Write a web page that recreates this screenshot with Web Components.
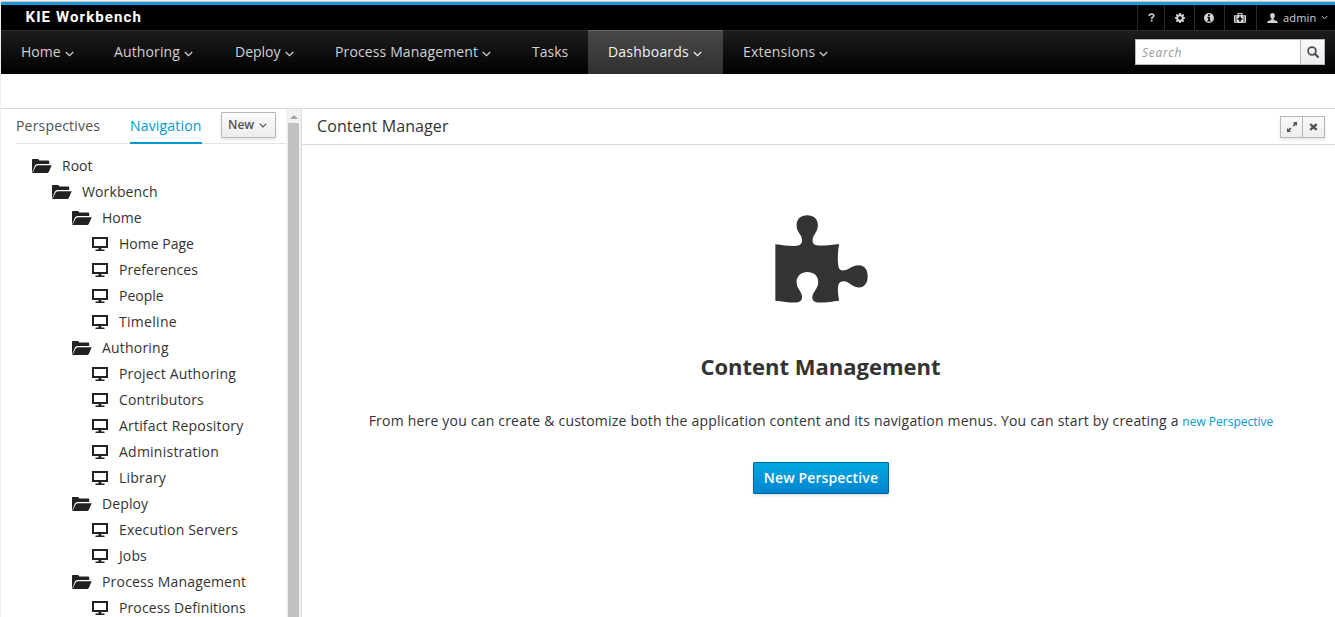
<!DOCTYPE html>
<html lang="en"><head><meta charset="utf-8"><title>KIE Workbench</title>
<style>
html,body{margin:0;height:100%;overflow:hidden;background:#fff}
body{font:14px/20px "Open Sans","Noto Sans",sans-serif;color:#333}
</style></head><body>
<kie-app></kie-app>
<script>
const define=(name,css,html,setup)=>{
  const t=document.createElement('template');
  t.innerHTML=`<style>*{box-sizing:border-box}:host{box-sizing:border-box;display:block}${css}</style>${html}`;
  customElements.define(name,class extends HTMLElement{
    connectedCallback(){
      if(this.shadowRoot)return;
      const r=this.attachShadow({mode:'open'});
      r.append(t.content.cloneNode(true));
      if(setup)setup(this,r);
    }
  });
};
const icons={
  chevron:['0 0 8 5','<path d="M.7.7 4 4 7.3.7" fill="none" stroke="currentColor" stroke-width="1.1"/>'],
  help:['0 0 8 10','<path d="M1.2 3.1Q1.4 1 4 1 6.6 1 6.6 3 6.6 4 5.3 4.8 4.3 5.3 4.2 6.5" fill="none" stroke="currentColor" stroke-width="1.9"/><path d="M3.1 7.5h2.1v2H3.1z" fill="currentColor"/>'],
  gear:['0 0 10 10','<path fill="currentColor" fill-rule="evenodd" d="M4.2 0h1.6l.3 1.4.8.3L8.1.9l1.1 1.1-.8 1.2.3.8 1.3.2v1.6l-1.3.3-.3.8.8 1.2L8 9.2l-1.2-.8-.7.3L5.8 10H4.2l-.3-1.3-.8-.3-1.2.8L.8 8.1l.8-1.2-.3-.8L0 5.8V4.2L1.3 4l.3-.8L.8 2 1.9.9l1.2.8.8-.3zM5 3.2A1.8 1.8 0 1 0 5 6.8 1.8 1.8 0 1 0 5 3.2z"/>'],
  info:['0 0 10 10','<path fill="currentColor" fill-rule="evenodd" d="M5 0a5 5 0 1 0 0 10A5 5 0 0 0 5 0zM4.1 1.3h1.8v1.6H4.1zM3.5 3.8h2.4v3.4h.7v1.2H3.4V7.2h.8V5h-.7z"/>'],
  medkit:['0 0 12 10','<path fill="currentColor" fill-rule="evenodd" d="M3.400 2V.6Q3.400 0 4 0h4q.6 0 .6.6V2H11q1 0 1 1v6q0 1-1 1H1q-1 0-1-1V3q0-1 1-1zM4.500 1.100V2h3v-.9zM5.200 3.600v1.600H3.700v1.600h1.500v1.600h1.600V6.800h1.500V5.200H6.800V3.600zM1.600 2.300v7.400h.7V2.300zM9.700 2.300v7.400h.7V2.300z"/>'],
  user:['0 0 11 10','<path fill="currentColor" d="M5.5 0C7.2 0 8 1.2 7.8 3 7.6 4.4 7 5.3 6.6 5.8v.9l3.2 1.2q1 .5 1 2.1H.2q0-1.6 1-2.1l3.2-1.2v-.9C4 5.3 3.4 4.4 3.2 3 3 1.200 3.800 0 5.500 0z"/>'],
  search:['0 0 12 12','<circle cx="5" cy="5" r="3.9" fill="none" stroke="currentColor" stroke-width="1.8"/><path d="M7.9 7.900 11 11" stroke="currentColor" stroke-width="2.200" stroke-linecap="round"/>'],
  folder:['0 0 20 14','<path fill="currentColor" d="M0 13.600V.6Q0 0 .6 0H5.800Q6.600 0 6.900.8L7.200 1.500H16.200Q17.200 1.500 17.200 2.500V5H5.600Q3.600 5 2.800 6.800L.8 12z"/><path fill="currentColor" d="M0 14 1.100 12.800 3.500 7.800Q4.200 6.200 5.900 6.200H19.700L16.900 12.700Q16.300 14 14.900 14z"/>'],
  screen:['0 0 16 14','<path fill="currentColor" fill-rule="evenodd" d="M0 0h16v11H9.300v1.500H12.500V14H3.500v-1.500h3V11H0zM2 2v7h12V2z"/>'],
  expand:['0 0 10 10','<path fill="currentColor" d="M10 0v4L8.700 2.700 6.700 4.600 5.500 3.400 7.400 1.400 6 0zM0 10V6l1.300 1.300L3.300 5.400 4.500 6.600 2.600 8.600 4 10z"/>'],
  close:['0 0 9 8','<path d="M1.300 1.200 7.700 6.800M7.700 1.200 1.300 6.800" stroke="currentColor" stroke-width="2.400"/>'],
  puzzle:['44 44 280 265','<path fill="currentColor" d="M45 132C75 136 105 140 118 134 128 129 127 116 121 105 114 95 109 88 109 75 109 56 122 45 141 45 160 45 173 56 173 74 173 89 167 96 161 106 156 116 154 130 166 134 180 139 215 134 237 131 233 155 231 185 236 202 240 215 254 212 266 206 277 199 284 195 297 195 315 195 323 210 323 229 323 250 312 262 297 262 283 262 275 254 264 247 252 241 239 242 235 254 231 268 235 288 237 302 215 305 180 310 166 306 153 301 155 287 161 278 167 268 174 260 174 246 174 227 160 216 142 216 123 216 109 228 109 246 109 261 117 268 122 278 128 289 127 301 116 306 102 311 70 304 45 302z"/>']
};
define('kie-icon',':host{display:inline-block;flex:none}svg{display:block;width:100%;height:100%}','<svg aria-hidden="true"></svg>',(h,r)=>{
  const s=r.querySelector('svg'),i=icons[h.getAttribute('name')];
  s.setAttribute('viewBox',i[0]);s.innerHTML=i[1];
});
define('kie-utility',`
:host{display:flex;height:25px;background:#000;color:#d1d1d1;font-size:11px;line-height:25px}
.brand{font:700 15px/24px Roboto,sans-serif;color:#fff;padding-left:24.5px;flex:1;letter-spacing:1.1px;white-space:pre}
.u{border-left:1px solid #2b2b2b;display:flex;align-items:center;justify-content:center}
.u:nth-of-type(2){width:27px}.u:nth-of-type(3),.u:nth-of-type(4){width:30px}.u:nth-of-type(5){width:32px}
.u:nth-of-type(4),.u:nth-of-type(5){padding-right:1px}
.user{width:79px;justify-content:flex-start;padding-left:10px}.user span{margin:0 4px 0 5px;width:34px;letter-spacing:.15px}`,
`<div class="brand">KIE Workbench</div>
<div class="u"><kie-icon name="help" style="width:7px;height:9px"></kie-icon></div>
<div class="u"><kie-icon name="gear" style="width:10px;height:10px"></kie-icon></div>
<div class="u"><kie-icon name="info" style="width:10px;height:10px"></kie-icon></div>
<div class="u"><kie-icon name="medkit" style="width:12px;height:10px"></kie-icon></div>
<div class="u user"><kie-icon name="user" style="width:11px;height:10px"></kie-icon><span>admin</span><kie-icon name="chevron" style="width:7px;height:5px"></kie-icon></div>`);
define('kie-nav-item',`
:host{display:flex;align-items:center;gap:4px;height:43px;padding:0 0 2px 20px;white-space:nowrap;color:#d1d1d1}
:host([active]){background:linear-gradient(#484848,#303030);border-top:1px solid #696969;margin-top:-1px;height:44px;color:#f1f1f1}
kie-icon{width:9px;height:6px;margin-top:4px}:host([plain]) kie-icon{display:none}`,
'<span><slot></slot></span><kie-icon name="chevron"></kie-icon>');
define('kie-nav',`
:host{display:flex;height:44px;border-top:1px solid #2c2c2c;background:linear-gradient(#1d1d1d,#000)}
.search{display:flex;margin:8px 10px 0 auto;width:190px;height:26px;border:1px solid #bababa;background:#fff}
.field{flex:1;padding-left:6px;font:italic 12px/25px "Open Sans",sans-serif;color:#999;letter-spacing:.7px}
.go{width:24px;border-left:1px solid #b7b7b7;background:linear-gradient(#fafafa,#ededed);display:grid;place-items:center;color:#4d5258}`,
`<kie-nav-item style="width:93px">Home</kie-nav-item><kie-nav-item style="width:121px;letter-spacing:.13px">Authoring</kie-nav-item><kie-nav-item style="width:100px">Deploy</kie-nav-item><kie-nav-item style="width:197px;letter-spacing:.13px">Process Management</kie-nav-item><kie-nav-item plain style="width:76px">Tasks</kie-nav-item><kie-nav-item active style="width:135px;letter-spacing:.2px">Dashboards</kie-nav-item><kie-nav-item style="width:125px;letter-spacing:.2px">Extensions</kie-nav-item>
<div class="search"><div class="field">Search</div><div class="go"><kie-icon name="search" style="width:12px;height:12px"></kie-icon></div></div>`);
define('kie-tree-item',`
:host{display:flex;align-items:center;height:26px;padding-left:calc(31px + 20px*var(--level));white-space:nowrap;color:#333}
kie-icon{color:#222;width:20px;height:14px;margin-right:10px}.screen{display:none;width:16px;margin-right:11px}
:host([leaf]) .folder{display:none}:host([leaf]) .screen{display:inline-block}`,
'<kie-icon class="folder" name="folder"></kie-icon><kie-icon class="screen" name="screen"></kie-icon><span><slot></slot></span>');
define('kie-sidebar',`
:host{display:flex;width:301px;border-right:1px solid #dadada;overflow:hidden}
.main{width:285px}
.tabs{display:flex;height:35px;margin-left:15px;border-bottom:1px solid #e3e3e3;color:#4d5258}
.tabs span{line-height:34px;height:35px;white-space:nowrap;letter-spacing:.18px}
.p{width:84px;margin-right:30px}.n{width:72px;color:#0099d3;border-bottom:2px solid #0099d3}
.new{display:flex;align-items:center;height:26px;width:55px;margin:3px 0 0 19px;padding-left:6px;border:1px solid #b7b7b7;border-radius:1px;background:linear-gradient(#fafafa,#ededed);box-shadow:0 2px 3px rgba(3,3,3,.1);font-weight:600;font-size:12px}
.new kie-icon{width:8px;height:5px;margin:1px 0 0 5px}
.tree{padding-top:9px}
.bar{width:15px;background:#f1f1f1;padding:6px 2px 0}.up{width:0;height:0;margin:0 auto 4px;border:4px solid transparent;border-top:0;border-bottom-color:#a3a3a3}.thumb{width:11px;height:600px;background:#c1c1c1}`,
`<div class="main"><div class="tabs"><span class="p">Perspectives</span><span class="n">Navigation</span><div class="new">New<kie-icon name="chevron"></kie-icon></div></div><div class="tree">${
[[0,'Root',0],[1,'Workbench',.12],[2,'Home',0],[3,'Home Page',0],[3,'Preferences',.1],[3,'People',0],[3,'Timeline',.3],[2,'Authoring',.2],[3,'Project Authoring',.17],[3,'Contributors',.15],[3,'Artifact Repository',.19],[3,'Administration',.24],[3,'Library',.2],[2,'Deploy',.1],[3,'Execution Servers',.18],[3,'Jobs',.1],[2,'Process Management',.19],[3,'Process Definitions',.11]].map(([l,t,s])=>`<kie-tree-item style="--level:${l};letter-spacing:${s}px"${l==3?' leaf':''}>${t}</kie-tree-item>`).join('')
}</div></div><div class="bar"><div class="up"></div><div class="thumb"></div></div>`);
define('kie-content',`
:host{flex:1;min-width:0}
header{display:flex;justify-content:space-between;height:36px;border-bottom:1px solid #dadada;padding:0 10px 0 15px;font-size:16px;line-height:34px;letter-spacing:.1px}
.tools{display:flex;width:45px;height:22px;margin-top:7px;border:1px solid #b7b7b7;background:linear-gradient(#fafafa,#ededed);box-shadow:0 2px 3px rgba(3,3,3,.1);color:#4d5258}
.tools div{flex:1;display:grid;place-items:center}.tools div+div{border-left:1px solid #b7b7b7}
main{display:flex;flex-direction:column;align-items:center;padding-left:5px}
h1{font-size:22px;line-height:30px;margin:48px 1px 0 0;font-weight:700}
p{margin:30px 0 0;line-height:20px;white-space:nowrap}p span{letter-spacing:.2px}a{color:#0099d3;font-size:12px}
.btn{margin:30px 1px 0 0;width:136px;height:32px;border:1px solid #00659c;border-radius:1px;background:linear-gradient(#00a8e1,#0085cf);box-shadow:0 2px 3px rgba(3,3,3,.1);color:#fff;font-weight:600;line-height:30px;padding-left:1px;text-align:center;white-space:nowrap;letter-spacing:.13px}`,
`<header><span class="t">Content Manager</span><div class="tools"><div><kie-icon name="expand" style="width:10px;height:10px"></kie-icon></div><div><kie-icon name="close" style="width:9px;height:8px"></kie-icon></div></div></header>
<main><kie-icon name="puzzle" style="width:93px;height:88px;margin-top:70px"></kie-icon><h1>Content Management</h1><p><span>From here you can create &amp; customize both the application content and its navigation menus. You can start by creating a</span> <a>new Perspective</a></p><div class="btn">New Perspective</div></main>`);
define('kie-app',`
:host{height:617px;border-left:1px solid #eee;border-top:1px solid #f0f0f0;overflow:hidden}
.accent{height:4px;background:#1b9add;border-top:1px solid #c7c2bf}
.body{display:flex;margin-top:34px;height:509px;border-top:1px solid #dadada}`,
'<div class="accent"></div><kie-utility></kie-utility><kie-nav></kie-nav><div class="body"><kie-sidebar></kie-sidebar><kie-content></kie-content></div>');
</script></body></html>
